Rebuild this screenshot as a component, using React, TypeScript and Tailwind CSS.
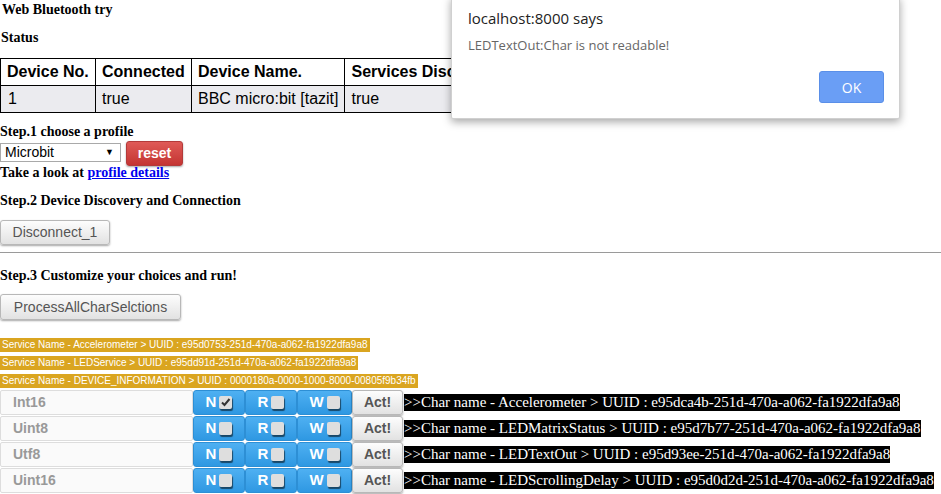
import React from 'react';

const serif = { fontFamily: '"Liberation Serif", "Times New Roman", serif' };
const sans = { fontFamily: '"Liberation Sans", Arial, sans-serif' };

const SERVICES = [
  'Service Name - Accelerometer > UUID : e95d0753-251d-470a-a062-fa1922dfa9a8',
  'Service Name - LEDService > UUID : e95dd91d-251d-470a-a062-fa1922dfa9a8',
  'Service Name - DEVICE_INFORMATION > UUID : 0000180a-0000-1000-8000-00805f9b34fb',
];

const CHARS = [
  { type: 'Int16', n: true, text: '>>Char name - Accelerometer > UUID : e95dca4b-251d-470a-a062-fa1922dfa9a8' },
  { type: 'Uint8', n: false, text: '>>Char name - LEDMatrixStatus > UUID : e95d7b77-251d-470a-a062-fa1922dfa9a8' },
  { type: 'Utf8', n: false, text: '>>Char name - LEDTextOut > UUID : e95d93ee-251d-470a-a062-fa1922dfa9a8' },
  { type: 'Uint16', n: false, text: '>>Char name - LEDScrollingDelay > UUID : e95d0d2d-251d-470a-a062-fa1922dfa9a8' },
];

function Box({ checked }: { checked?: boolean }) {
  return (
    <span className="ml-[3px] inline-flex h-[13px] w-[13px] items-center justify-center rounded-[2px] bg-[#dedede] shadow-[1px_2px_1px_rgba(0,0,0,0.55)]">
      {checked && (
        <svg width="11" height="11" viewBox="0 0 11 11">
          <path d="M2 5.5 L4.5 8 L9.5 2" fill="none" stroke="#333" strokeWidth="2" />
        </svg>
      )}
    </span>
  );
}

function BlueBtn({ label, checked, w }: { label: string; checked?: boolean; w: string }) {
  return (
    <div
      className={`${w} flex h-full items-center justify-center rounded-[3px] border border-[#2d8fd5] bg-gradient-to-b from-[#4eb0f2] to-[#2e98e2] text-[15px] font-bold text-white`}
      style={sans}
    >
      {label}
      <Box checked={checked} />
    </div>
  );
}

function GrayBtn({ children, className = '' }: { children: React.ReactNode; className?: string }) {
  return (
    <button
      className={`shrink-0 rounded-[3px] border border-[#b8b8b8] bg-gradient-to-b from-[#fdfdfd] to-[#e2e2e2] text-[14px] text-[#555] shadow-[0_1px_2px_rgba(0,0,0,0.35)] ${className}`}
      style={sans}
    >
      {children}
    </button>
  );
}

export default function App() {
  return (
    <div className="relative h-[494px] w-[941px] overflow-hidden bg-white text-black">
      <div className="flex flex-col" style={serif}>
        <div className="mt-[2px] pl-[2px] text-[14px] font-bold leading-[16px]">Web Bluetooth try</div>
        <div className="mt-[12px] pl-[1px] text-[14px] font-bold leading-[16px]">Status</div>

        <table className="mt-[12px] w-max border-collapse whitespace-nowrap text-[16px] leading-[18px]" style={sans}>
          <thead>
            <tr>
              <th className="h-[27px] w-[95px] border border-black px-[6px] py-0 text-left font-bold">Device No.</th>
              <th className="h-[27px] w-[96px] border border-black px-[6px] py-0 text-left font-bold">Connected</th>
              <th className="h-[27px] w-[153px] border border-black px-[6px] py-0 text-left font-bold">Device Name.</th>
              <th className="h-[27px] w-[200px] border border-black px-[6px] py-0 text-left font-bold">Services Discovered</th>
            </tr>
          </thead>
          <tbody>
            <tr className="bg-[#ebebef]">
              <td className="h-[27px] border border-black px-[7px] py-0">1</td>
              <td className="h-[27px] border border-black px-[6px] py-0">true</td>
              <td className="h-[27px] border border-black px-[6px] py-0">BBC micro:bit [tazit]</td>
              <td className="h-[27px] border border-black px-[6px] py-0">true</td>
            </tr>
          </tbody>
        </table>

        <div className="mt-[11px] text-[14px] font-bold leading-[16px]">Step.1 choose a profile</div>
        <div className="mt-[1px] flex items-start">
          <div
            className="mt-[2px] flex h-[19px] w-[121px] items-center justify-between border border-[#a9a9a9] pl-[4px] pr-[6px] text-[14px]"
            style={sans}
          >
            <span>Microbit</span>
            <span className="text-[9px]">▼</span>
          </div>
          <button
            className="ml-[5px] h-[25px] w-[57px] rounded-[3px] border border-[#b33a3a] bg-gradient-to-b from-[#df5a57] to-[#c43432] text-[14px] font-bold text-white shadow-[0_1px_2px_rgba(0,0,0,0.35)]"
            style={sans}
          >
            reset
          </button>
        </div>
        <div className="-mt-[1px] text-[14px] font-bold leading-[16px]">
          Take a look at <span className="text-[#0000ee] underline">profile details</span>
        </div>

        <div className="mt-[12px] text-[14px] font-bold leading-[16px]">Step.2 Device Discovery and Connection</div>
        <GrayBtn className="mt-[11px] h-[25px] w-[110px]">Disconnect_1</GrayBtn>

        <div className="mt-[7px] h-px w-full bg-[#9a9a9a]" />

        <div className="mt-[15px] text-[14px] font-bold leading-[16px]">Step.3 Customize your choices and run!</div>
        <GrayBtn className="mt-[10px] h-[26px] w-[181px]">ProcessAllCharSelctions</GrayBtn>

        <div className="mt-[18px] flex flex-col items-start gap-[4px]" style={sans}>
          {SERVICES.map((s) => (
            <div key={s} className="h-[14px] bg-[#daa520] pl-[2px] pr-[2px] text-[10px] leading-[14px] text-white">
              {s}
            </div>
          ))}
        </div>

        <div className="mt-[2px] flex flex-col gap-px">
          {CHARS.map((c) => (
            <div key={c.type} className="flex h-[25px] items-stretch">
              <div
                className="flex w-[193px] shrink-0 items-center rounded-[2px] border border-[#ddd] bg-[#fafafa] pl-[12px] text-[14px] font-bold text-[#999]"
                style={sans}
              >
                {c.type}
              </div>
              <BlueBtn label="N" checked={c.n} w="w-[52px] shrink-0" />
              <BlueBtn label="R" w="w-[52px] shrink-0" />
              <BlueBtn label="W" w="w-[55px] shrink-0" />
              <GrayBtn className="h-[25px] w-[51px] font-bold text-[#444]">Act!</GrayBtn>
              <div className="ml-px flex items-center whitespace-nowrap">
                <span className="bg-black text-[15px] leading-[17px] text-white" style={serif}>
                  {c.text}
                </span>
              </div>
            </div>
          ))}
        </div>
      </div>

      {/* alert dialog */}
      <div
        className="absolute left-[451px] top-[-4px] h-[123px] w-[449px] rounded-[2px] border border-[#d0d0d0] bg-white shadow-[0_3px_8px_rgba(0,0,0,0.35)]"
        style={{ fontFamily: '"Open Sans", "Noto Sans", sans-serif' }}
      >
        <div className="absolute left-[16px] top-[10px] text-[15px] text-[#222]">localhost:8000 says</div>
        <div className="absolute left-[16px] top-[39px] text-[13px] text-[#666]">LEDTextOut:Char is not readable!</div>
        <div className="absolute left-[367px] top-[74px] flex h-[32px] w-[65px] items-center justify-center rounded-[3px] border border-[#5a8fe8] bg-[#6a9ef5] text-[14px] text-white">
          OK
        </div>
      </div>
    </div>
  );
}
